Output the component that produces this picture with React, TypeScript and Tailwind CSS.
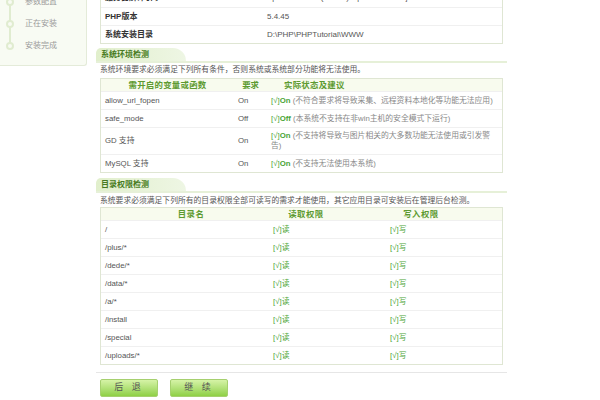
import type { ReactNode } from 'react';

const FONT = "font-['Liberation_Sans','Noto_Sans_CJK_SC',sans-serif]";

const STEPS = ['参数配置', '正在安装', '安装完成'];

const ENV_ROWS: Array<{ name: string; need: string; status: string; note: ReactNode; tall?: boolean }> = [
  { name: 'allow_url_fopen', need: 'On', status: 'On', note: '(不符合要求将导致采集、远程资料本地化等功能无法应用)' },
  { name: 'safe_mode', need: 'Off', status: 'Off', note: '(本系统不支持在非win主机的安全模式下运行)' },
  {
    name: 'GD 支持',
    need: 'On',
    status: 'On',
    note: (
      <>
        (不支持将导致与图片相关的大多数功能无法使用或引发警
        <br />
        告)
      </>
    ),
    tall: true,
  },
  { name: 'MySQL 支持', need: 'On', status: 'On', note: '(不支持无法使用本系统)' },
];

const DIRS = ['/', '/plus/*', '/dede/*', '/data/*', '/a/*', '/install', '/special', '/uploads/*'];

// section title with the little green tab
function Tab({ title }: { title: string }) {
  return (
    <div className="flex h-[15px] items-end border-b-2 border-[#e6f0d8]">
      <div className="h-[13px] w-[90px] rounded-tl-[7px] rounded-tr-[18px] bg-linear-to-r from-[#e1efcc] to-[#eef6e4] pl-[5px] text-[8px] font-bold leading-[13px] text-[#477a22]">
        {title}
      </div>
    </div>
  );
}

function Check({ children }: { children: ReactNode }) {
  return <span className="text-[#4aa536]">[√]{children}</span>;
}

export default function App() {
  return (
    <div className={`${FONT} relative flex h-[400px] w-[600px] overflow-hidden bg-white`}>
      {/* left steps panel */}
      <aside className="h-[66px] w-[87px] shrink-0 rounded-br-[3px] border-r border-b border-[#e4ebd9] bg-[#f8fbf3]">
        <div className="relative -mt-[7px] flex flex-col gap-[4px] pl-[6px]">
          <div className="absolute -top-[4px] left-[9px] h-[56px] w-[2px] bg-[#e0ecd0]" />
          {STEPS.map((s) => (
            <div key={s} className="relative flex h-[18px] items-center gap-[11px]">
              <span className="h-[8px] w-[8px] rounded-full border-2 border-[#e0ecd0] bg-[#f8fbf3]" />
              <span className="text-[8px] text-[#9a9a9a]">{s}</span>
            </div>
          ))}
        </div>
      </aside>

      <main className="-mt-[12px] ml-[9px] w-[411px]">
        {/* server info */}
        <div className="mx-[4px] border border-[#dfe6d3] text-[8px]">
          {[
            ['服务器解译引擎', 'Apache/2.4.23 (Win32) OpenSSL/1.0.2j PHP/5.4.45'],
            ['PHP版本', '5.4.45'],
            ['系统安装目录', 'D:\\PHP\\PHPTutorial\\WWW'],
          ].map(([k, v], i) => (
            <div key={k} className={`grid h-[18px] grid-cols-[166px_1fr] items-center ${i > 0 ? 'border-t border-[#f0f0f0]' : ''}`}>
              <span className="pl-[4px] font-bold text-[#333]">{k}</span>
              <span className="text-[#555]">{v}</span>
            </div>
          ))}
        </div>

        <div className="mt-[4px]">
          <Tab title="系统环境检测" />
        </div>
        <p className="mt-[2px] h-[10px] pl-[4px] text-[7.8px] leading-[10px] text-[#555]">
          系统环境要求必须满足下列所有条件，否则系统或系统部分功能将无法使用。
        </p>

        <div className="mx-[4px] mt-[3px] border border-[#dfe6d3] text-[7.8px]">
          <div className="grid h-[12px] grid-cols-[133px_33px_1fr] items-center bg-[#f8fbee] text-[8.4px] font-bold text-[#5d9a30]">
            <span className="text-center tracking-[0.3px]">需开启的变量或函数</span>
            <span className="text-center">要求</span>
            <span className="pl-[17px] tracking-[0.3px]">实际状态及建议</span>
          </div>
          {ENV_ROWS.map((r) => (
            <div
              key={r.name}
              className={`grid grid-cols-[133px_33px_1fr] items-center border-t border-[#f0f0f0] text-[#555] ${r.tall ? 'h-[27px]' : 'h-[18px]'}`}
            >
              <span className="pl-[4px]">{r.name}</span>
              <span className="pl-[4px]">{r.need}</span>
              <span className="pl-[4px] leading-[10px] whitespace-nowrap">
                <span className="text-[#4aa536]">[√]</span>
                <span className="font-bold text-[#4aa536]">{r.status}</span>
                <span className="text-[#888]"> {r.note}</span>
              </span>
            </div>
          ))}
        </div>

        <div className="mt-[5px]">
          <Tab title="目录权限检测" />
        </div>
        <p className="mt-[3px] h-[10px] pl-[4px] text-[7.8px] leading-[10px] whitespace-nowrap text-[#555]">
          系统要求必须满足下列所有的目录权限全部可读写的需求才能使用，其它应用目录可安装后在管理后台检测。
        </p>

        <div className="mx-[4px] mt-[1px] border border-[#dfe6d3] text-[7.8px]">
          <div className="grid h-[12px] grid-cols-[180px_50px_1fr] items-center bg-[#f8fbee] text-[8.4px] font-bold text-[#5d9a30]">
            <span className="text-center tracking-[0.5px]">目录名</span>
            <span className="text-center tracking-[0.5px] whitespace-nowrap">读取权限</span>
            <span className="pl-[9px] text-center tracking-[0.5px]">写入权限</span>
          </div>
          {DIRS.map((d) => (
            <div key={d} className="grid h-[18px] grid-cols-[168px_117px_1fr] items-center border-t border-[#f0f0f0] text-[#555]">
              <span className="pl-[4px]">{d}</span>
              <span className="pl-[4px]">
                <Check>读</Check>
              </span>
              <span className="pl-[4px]">
                <Check>写</Check>
              </span>
            </div>
          ))}
        </div>

        <div className="mt-[7px] border-t border-[#e6e6e6]" />

        <div className="mt-[6px] flex gap-[12px] pl-[4px]">
          {['后 退', '继 续'].map((b) => (
            <button
              key={b}
              className="h-[18px] w-[58px] rounded-[2px] border border-[#a6d06f] bg-linear-to-b from-[#d6f3a6] to-[#8fd044] text-[9px] tracking-[3px] text-[#555]"
            >
              {b}
            </button>
          ))}
        </div>
      </main>
    </div>
  );
}
